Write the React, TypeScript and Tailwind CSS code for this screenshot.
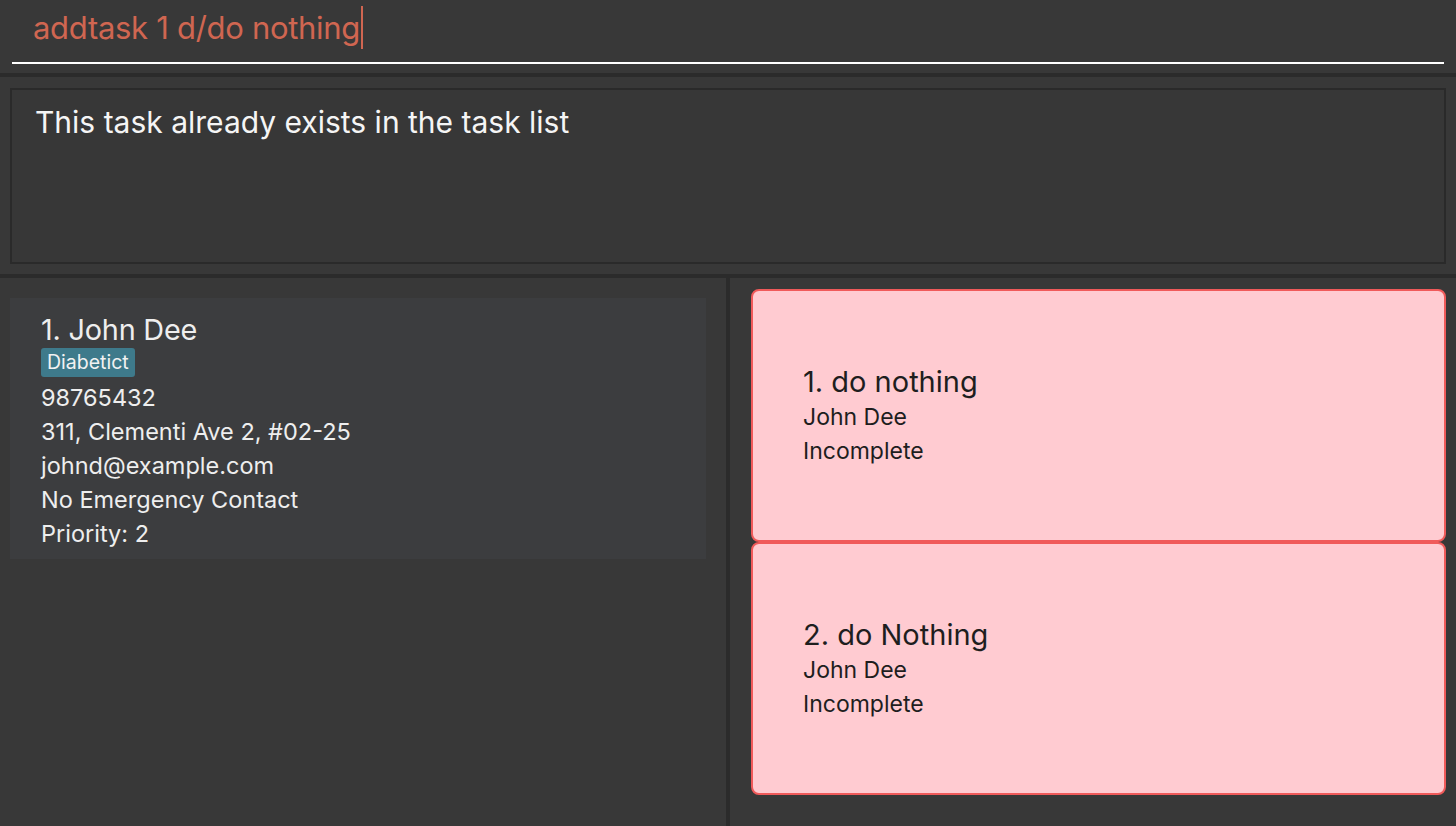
const font = { fontFamily: "Inter, 'Noto Sans', sans-serif" }

type Task = { id: number; title: string; person: string; status: string }

const tasks: Task[] = [
  { id: 1, title: "do nothing", person: "John Dee", status: "Incomplete" },
  { id: 2, title: "do Nothing", person: "John Dee", status: "Incomplete" },
]

const details = [
  "98765432",
  "311, Clementi Ave 2, #02-25",
  "johnd@example.com",
  "No Emergency Contact",
  "Priority: 2",
]

function TaskCard({ task }: { task: Task }) {
  return (
    <div className="flex h-[253px] flex-col justify-center rounded-[8px] border-2 border-[#f05a5a] bg-[#ffcbd1] pl-[50px] text-[#1e1e1e]">
      <div className="text-[29px] leading-[36px]">
        {task.id}. {task.title}
      </div>
      <div className="text-[23px] leading-[34px]">{task.person}</div>
      <div className="text-[23px] leading-[34px]">{task.status}</div>
    </div>
  )
}

export default function App() {
  return (
    <div style={font} className="flex h-[826px] w-[1456px] flex-col overflow-hidden bg-[#383838]">
      {/* command box */}
      <div className="h-[73px] shrink-0 px-[12px] pt-[8px]">
        <div className="flex h-[56px] items-start border-b-2 border-white pl-[21px]">
          <span className="mt-[1px] text-[31px] leading-[38px] tracking-[-0.3px] text-[#d06651]">
            addtask 1 d/do nothing
          </span>
          <span className="-mt-[2px] ml-[1px] h-[43px] w-[2px] bg-[#d06651]" />
        </div>
      </div>
      <div className="h-[4px] shrink-0 bg-[#2b2b2b]" />

      {/* result display */}
      <div className="h-[197px] shrink-0 px-[10px] pt-[11px]">
        <div className="h-[176px] border-2 border-[#2a2a2a] bg-[#373737] px-[23px] pt-[12px]">
          <p className="text-[30px] leading-[40px] text-[#f5f5f5]">
            This task already exists in the task list
          </p>
        </div>
      </div>
      <div className="h-[4px] shrink-0 bg-[#2b2b2b]" />

      {/* lists */}
      <div className="flex min-h-0 flex-1">
        <div className="w-[726px] shrink-0 pl-[10px] pr-[20px] pt-[20px]">
          <div className="h-[261px] bg-[#3c3d3f] pl-[31px] pt-[14px] text-[#eeeeee]">
            <div className="text-[28.8px] leading-[36px] tracking-[-0.2px]">1. John Dee</div>
            <div className="flex">
              <span className="rounded-[3px] bg-[#3e7a8b] px-[6px] text-[19.5px] leading-[29px] text-[#f2f2f2]">
                Diabetict
              </span>
            </div>
            <div className="mt-[4px]">
              {details.map((d) => (
                <div key={d} className="text-[23.5px] leading-[34px]">
                  {d}
                </div>
              ))}
            </div>
          </div>
        </div>
        <div className="w-[4px] shrink-0 bg-[#2b2b2b]" />
        <div className="flex flex-1 flex-col pl-[21px] pr-[10px] pt-[11px]">
          {tasks.map((t) => (
            <TaskCard key={t.id} task={t} />
          ))}
        </div>
      </div>
    </div>
  )
}
